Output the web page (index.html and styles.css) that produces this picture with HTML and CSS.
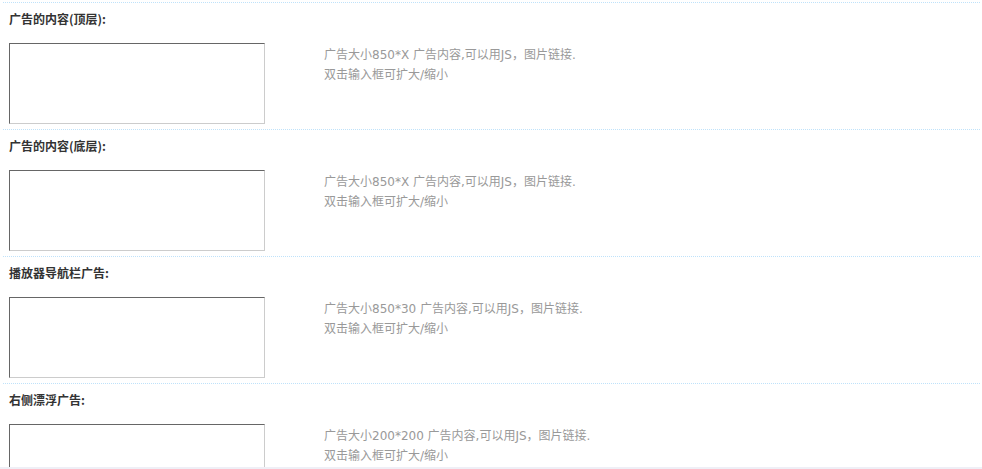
FILE: index.html
```html
<!DOCTYPE html>
<html lang="zh-CN">
<head>
<meta charset="UTF-8" />
<title>广告设置</title>
<link rel="stylesheet" href="styles.css">
</head>
<body>

<div class="frame">
  <div class="ad-row">
    <div class="ad-title">广告的内容(顶层):</div>
    <div class="ad-body">
      <textarea class="ad-input"></textarea>
      <div class="ad-tip">
        广告大小850*X 广告内容,可以用JS，图片链接.<br />
        双击输入框可扩大/缩小
      </div>
    </div>
  </div>

  <div class="ad-row">
    <div class="ad-title">广告的内容(底层):</div>
    <div class="ad-body">
      <textarea class="ad-input"></textarea>
      <div class="ad-tip">
        广告大小850*X 广告内容,可以用JS，图片链接.<br />
        双击输入框可扩大/缩小
      </div>
    </div>
  </div>

  <div class="ad-row">
    <div class="ad-title">播放器导航栏广告:</div>
    <div class="ad-body">
      <textarea class="ad-input"></textarea>
      <div class="ad-tip">
        广告大小850*30 广告内容,可以用JS，图片链接.<br />
        双击输入框可扩大/缩小
      </div>
    </div>
  </div>

  <div class="ad-row">
    <div class="ad-title">右侧漂浮广告:</div>
    <div class="ad-body">
      <textarea class="ad-input"></textarea>
      <div class="ad-tip">
        广告大小200*200 广告内容,可以用JS，图片链接.<br />
        双击输入框可扩大/缩小
      </div>
    </div>
  </div>
</div>

</body>
</html>
```

FILE: styles.css
```css
html, body {
  margin: 0;
  padding: 0;
  background: #fff;
}
body {
  font-family: "Noto Sans CJK SC", "DejaVu Sans", sans-serif;
  font-size: 12px;
  color: #333;
}
.frame {
  height: 469px;
  overflow: hidden;
  padding-top: 2px;
  box-sizing: border-box;
  border-bottom: 2px solid #efeff6;
}
.ad-row {
  margin: 0 2px 0 3px;
  border-top: 1px dotted #bfe2fa;
  padding: 6px 6px 5px;
}
.ad-title {
  font-weight: bold;
  line-height: 20px;
  height: 20px;
  color: #333;
}
.ad-body {
  display: flex;
  gap: 59px;
  margin-top: 14px;
}
.ad-input {
  width: 256px;
  height: 81px;
  box-sizing: border-box;
  margin: 0;
  padding: 2px;
  resize: none;
  border: 1px solid #ccc;
  border-top-color: #666;
  border-left-color: #666;
  flex-shrink: 0;
}
.ad-tip {
  padding-top: 2px;
  line-height: 20px;
  color: #999;
  font-family: "DejaVu Sans", "Noto Sans CJK SC", sans-serif;
  font-size: 12px;
}
```
